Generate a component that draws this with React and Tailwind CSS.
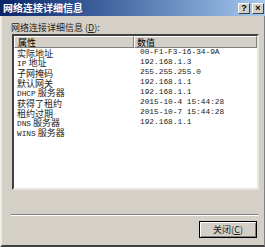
import React from "react";

const rows = [
  { k: <>实际地址</>, v: "00-F1-F3-16-34-9A" },
  { k: <><span className="font-['Liberation_Mono'] text-[7.8px]">IP</span> 地址</>, v: "192.168.1.3" },
  { k: <>子网掩码</>, v: "255.255.255.0" },
  { k: <>默认网关</>, v: "192.168.1.1" },
  { k: <><span className="font-['Liberation_Mono'] text-[7.8px]">DHCP</span> 服务器</>, v: "192.168.1.1" },
  { k: <>获得了租约</>, v: "2015-10-4 15:44:28" },
  { k: <>租约过期</>, v: "2015-10-7 15:44:28" },
  { k: <><span className="font-['Liberation_Mono'] text-[7.8px]">DNS</span> 服务器</>, v: "192.168.1.1" },
  { k: <><span className="font-['Liberation_Mono'] text-[7.8px]">WINS</span> 服务器</>, v: "" },
];

function CaptionButton({ children }) {
  return (
    <div className="w-[12px] h-[11px] bg-[#d4d0c8] border-t border-l border-white border-r border-b border-r-[#404040] border-b-[#404040] flex items-center justify-center text-[9px] font-bold leading-none text-black font-['Liberation_Sans']">
      {children}
    </div>
  );
}

export default function App() {
  return (
    <div className="w-[265px] h-[247px] bg-[#d4d0c8] flex flex-col font-['Noto_Sans_CJK_SC',sans-serif] text-black overflow-hidden">
      {/* 标题栏 */}
      <div className="h-[16px] shrink-0 flex items-center justify-between pl-[3px] pr-[1px] bg-gradient-to-r from-[#0a246a] to-[#a6caf0]">
        <span className="text-white font-bold text-[10px] leading-none">网络连接详细信息</span>
        <div className="flex gap-[2px]">
          <CaptionButton>?</CaptionButton>
          <CaptionButton>×</CaptionButton>
        </div>
      </div>

      <div className="flex-1 flex flex-col pl-[9px] pr-[6px] border-l-2 border-l-[#eeece6] border-r border-r-[#808080] border-b-2 border-b-[#404040]">
        <div className="mt-[7px] text-[9px] leading-[10px] text-[#222]">
          网络连接详细信息 (<span className="underline">D</span>):
        </div>

        {/* 列表 */}
        <div className="mt-[1px] ml-[1px] w-[247px] h-[156px] bg-white border-2 border-t-[#404040] border-l-[#404040] border-r-[#e8e6e0] border-b-[#e8e6e0] flex flex-col">
          <div className="flex h-[12px] shrink-0 text-[9px] leading-none">
            <div className="w-[120px] bg-[#d4d0c8] border-t border-l border-white border-r border-b border-r-[#808080] border-b-[#808080] flex items-center pl-[3px]">
              属性
            </div>
            <div className="flex-1 bg-[#d4d0c8] border-t border-l border-white border-r border-b border-r-[#808080] border-b-[#808080] flex items-center pl-[2px]">
              数值
            </div>
          </div>
          {rows.map((r, i) => (
            <div key={i} className="flex h-[10px] items-center text-[9px] leading-none text-[#222]">
              <div className="w-[120px] pl-[3px] whitespace-nowrap">{r.k}</div>
              <div className="pl-[6px] font-['Liberation_Mono'] text-[7.8px] whitespace-nowrap">{r.v}</div>
            </div>
          ))}
        </div>

        {/* 分隔线 */}
        <div className="mt-[24px] h-[2px] border-t border-t-[#808080] border-b border-b-white"></div>

        <div className="mt-[5px] flex justify-end pr-[1px]">
          <button className="w-[58px] h-[17px] border border-black bg-[#d4d0c8] flex items-center justify-center text-[9px] leading-none text-[#222] shadow-[inset_1px_1px_0_#fff,inset_-1px_-1px_0_#808080]">
            关闭(<span className="underline">C</span>)
          </button>
        </div>
      </div>
    </div>
  );
}
